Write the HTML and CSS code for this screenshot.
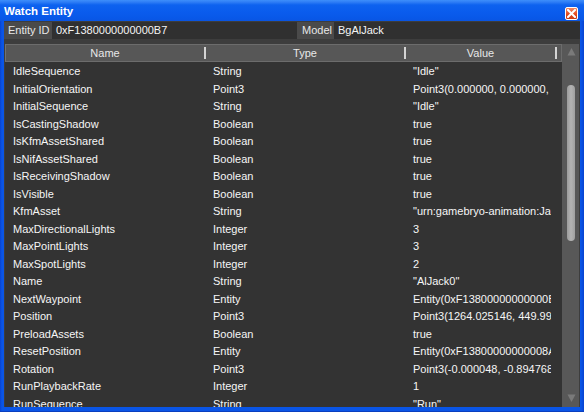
FILE: index.html
```html
<!DOCTYPE html>
<html>
<head>
<meta charset="utf-8">
<link rel="stylesheet" href="styles.css">
</head>
<body>
<div class="window">
  <div class="titlebar">
    <span class="title">Watch Entity</span>
    <span class="close"><svg width="9" height="9" viewBox="0 0 9 9"><path d="M1 1 L8 8 M8 1 L1 8" stroke="#fff" stroke-width="2" stroke-linecap="square"/></svg></span>
  </div>
  <div class="content">
    <div class="idrow">
      <span class="label l1">Entity ID</span><span class="field f1">0xF1380000000000B7</span>
      <span class="label l2">Model</span><span class="field f2">BgAlJack</span>
    </div>
    <div class="grid">
      <div class="table">
        <div class="head">
          <div class="hc c1">Name</div>
          <div class="hc c2">Type</div>
          <div class="hc c3">Value</div>
        </div>
        <div class="rows">
          <div class="row"><span class="c1">IdleSequence</span><span class="c2">String</span><span class="c3">"Idle"</span></div>
          <div class="row"><span class="c1">InitialOrientation</span><span class="c2">Point3</span><span class="c3">Point3(0.000000, 0.000000, 0.000000)</span></div>
          <div class="row"><span class="c1">InitialSequence</span><span class="c2">String</span><span class="c3">"Idle"</span></div>
          <div class="row"><span class="c1">IsCastingShadow</span><span class="c2">Boolean</span><span class="c3">true</span></div>
          <div class="row"><span class="c1">IsKfmAssetShared</span><span class="c2">Boolean</span><span class="c3">true</span></div>
          <div class="row"><span class="c1">IsNifAssetShared</span><span class="c2">Boolean</span><span class="c3">true</span></div>
          <div class="row"><span class="c1">IsReceivingShadow</span><span class="c2">Boolean</span><span class="c3">true</span></div>
          <div class="row"><span class="c1">IsVisible</span><span class="c2">Boolean</span><span class="c3">true</span></div>
          <div class="row"><span class="c1">KfmAsset</span><span class="c2">String</span><span class="c3">"urn:gamebryo-animation:Jack"</span></div>
          <div class="row"><span class="c1">MaxDirectionalLights</span><span class="c2">Integer</span><span class="c3">3</span></div>
          <div class="row"><span class="c1">MaxPointLights</span><span class="c2">Integer</span><span class="c3">3</span></div>
          <div class="row"><span class="c1">MaxSpotLights</span><span class="c2">Integer</span><span class="c3">2</span></div>
          <div class="row"><span class="c1">Name</span><span class="c2">String</span><span class="c3">"AlJack0"</span></div>
          <div class="row"><span class="c1">NextWaypoint</span><span class="c2">Entity</span><span class="c3">Entity(0xF13800000000000B)</span></div>
          <div class="row"><span class="c1">Position</span><span class="c2">Point3</span><span class="c3">Point3(1264.025146, 449.990234, 108.125000)</span></div>
          <div class="row"><span class="c1">PreloadAssets</span><span class="c2">Boolean</span><span class="c3">true</span></div>
          <div class="row"><span class="c1">ResetPosition</span><span class="c2">Entity</span><span class="c3">Entity(0xF13800000000008A)</span></div>
          <div class="row"><span class="c1">Rotation</span><span class="c2">Point3</span><span class="c3">Point3(-0.000048, -0.894768, 0.446574)</span></div>
          <div class="row"><span class="c1">RunPlaybackRate</span><span class="c2">Integer</span><span class="c3">1</span></div>
          <div class="row"><span class="c1">RunSequence</span><span class="c2">String</span><span class="c3">"Run"</span></div>
        </div>
      </div>
      <div class="scrollbar">
        <svg class="arrow" width="9" height="9" viewBox="0 0 9 9"><path d="M4.5 1 L8.5 8.5 L0.5 8.5 Z" fill="#7a7a7a"/></svg>
        <div class="track"><div class="thumb"></div></div>
        <svg class="arrow" width="9" height="9" viewBox="0 0 9 9"><path d="M0.5 0.5 L8.5 0.5 L4.5 8 Z" fill="#7a7a7a"/></svg>
      </div>
    </div>
  </div>
</div>
</body>
</html>
```

FILE: styles.css
```css
html, body {
  margin: 0;
  padding: 0;
  background: #0a52e2;
}
.window {
  width: 584px;
  height: 412px;
  box-sizing: border-box;
  display: flex;
  flex-direction: column;
  background: linear-gradient(to right, #0842d0 0px, #0a55e6 2px, #0a55e6 581px, #0842d0 584px);
  font-family: "Liberation Sans", Arial, sans-serif;
  font-size: 11px;
  overflow: hidden;
  border-bottom: 1px solid #0a3fbf;
}
.titlebar {
  height: 21px;
  flex: none;
  display: flex;
  align-items: center;
  padding-left: 4px;
  background: linear-gradient(to bottom, #3d8ffb 0px, #2f7ef6 2px, #0d62ef 5px, #0a5ced 12px, #0858e8 18px, #0a55e2 21px);
}
.title {
  color: #fff;
  font-weight: bold;
  font-size: 11.5px;
  line-height: 21px;
  padding-top: 2px;
}
.close {
  margin-left: auto;
  margin-right: 6px;
  margin-top: 5px;
  width: 13px;
  height: 13px;
  box-sizing: border-box;
  border: 1px solid #fff;
  border-radius: 2px;
  background: linear-gradient(to bottom, #f28a64, #e0461c 60%, #c83c16);
  display: flex;
  align-items: center;
  justify-content: center;
}
.close svg { display: block; }
.content {
  flex: 1;
  min-height: 0;
  margin: 0 4px 4px 4px;
  background: #3d3d3d;
  display: flex;
  flex-direction: column;
}
.idrow {
  margin-top: 1px;
  height: 17px;
  line-height: 17px;
  display: flex;
  flex: none;
}
.label {
  background: #4a4a4a;
  color: #e8e8e8;
  box-sizing: border-box;
}
.l1 { width: 48px; padding-left: 4px; }
.l2 { width: 37px; padding-left: 5px; }
.field {
  background: #303030;
  color: #f4f4f4;
  padding-left: 4px;
  box-sizing: border-box;
}
.f1 { width: 245px; }
.f2 { flex: 1; }
.grid {
  flex: 1;
  min-height: 0;
  margin: 5px 1px 0 1px;
  display: flex;
}
.table {
  width: 557px;
  display: flex;
  flex-direction: column;
  min-height: 0;
}
.head {
  height: 18px;
  flex: none;
  box-sizing: border-box;
  border: 1px solid #6c6c6c;
  border-left-color: #727272;
  background: #575757;
  display: flex;
  color: #e8e8e8;
  line-height: 16px;
}
.hc {
  position: relative;
  text-align: center;
  box-sizing: border-box;
  padding-right: 2px;
}
.hc::after {
  content: "";
  position: absolute;
  right: 0;
  top: 2px;
  width: 2px;
  height: 12px;
  background: #d4d4d4;
}
.head .c1 { width: 200px; }
.head .c2 { width: 200px; }
.head .c3 { width: 151px; }
.rows {
  flex: 1;
  min-height: 0;
  overflow: hidden;
  background: #333333;
  padding-top: 1px;
}
.row {
  display: flex;
  height: 17.5px;
  line-height: 17.5px;
  color: #f6f6f6;
  white-space: nowrap;
}
.row span {
  overflow: hidden;
  box-sizing: border-box;
  flex: none;
}
.row .c1 { width: 201px; padding-left: 8px; }
.row .c2 { width: 200px; padding-left: 7px; }
.row .c3 { width: 145px; padding-left: 7px; }
.scrollbar {
  width: 17px;
  background: #585858;
  display: flex;
  flex-direction: column;
  align-items: center;
  padding: 3px 0 4px;
  box-sizing: border-box;
}
.arrow { display: block; flex: none; margin-left: 1px; }
.track {
  flex: 1;
  width: 100%;
  display: flex;
  justify-content: center;
  padding-top: 29px;
}
.thumb {
  width: 8px;
  height: 156px;
  border-radius: 4px;
  background: linear-gradient(to right, #9c9c9c, #b4b4b4 50%, #a0a0a0);
  margin-left: 1px;
}
```
